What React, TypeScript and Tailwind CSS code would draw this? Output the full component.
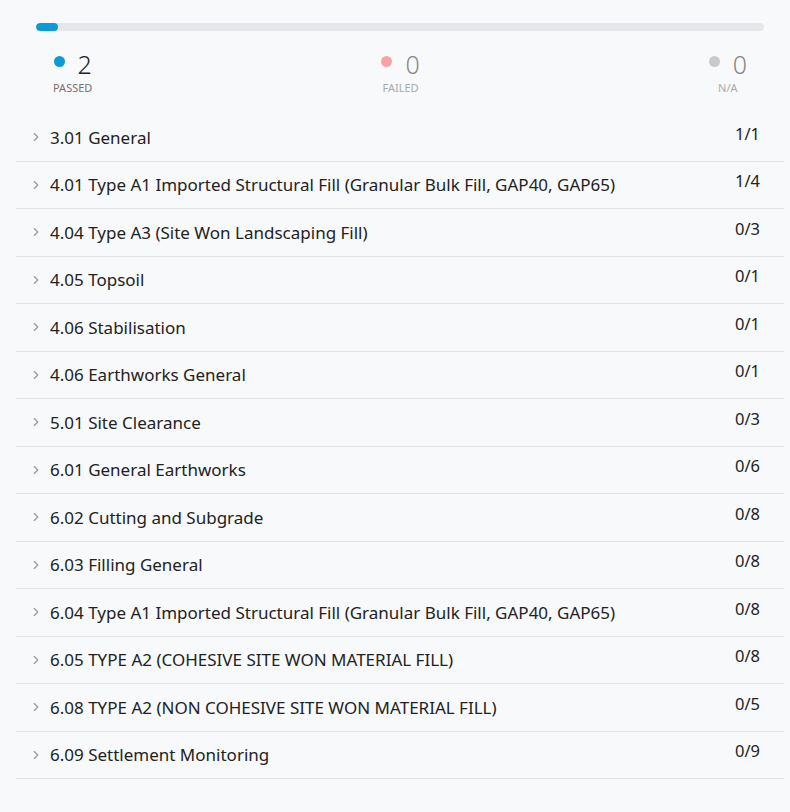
import { ChevronRight } from "lucide-react";

const sections = [
  { title: "3.01 General", count: "1/1" },
  { title: "4.01 Type A1 Imported Structural Fill (Granular Bulk Fill, GAP40, GAP65)", count: "1/4" },
  { title: "4.04 Type A3 (Site Won Landscaping Fill)", count: "0/3" },
  { title: "4.05 Topsoil", count: "0/1" },
  { title: "4.06 Stabilisation", count: "0/1" },
  { title: "4.06 Earthworks General", count: "0/1" },
  { title: "5.01 Site Clearance", count: "0/3" },
  { title: "6.01 General Earthworks", count: "0/6" },
  { title: "6.02 Cutting and Subgrade", count: "0/8" },
  { title: "6.03 Filling General", count: "0/8" },
  { title: "6.04 Type A1 Imported Structural Fill (Granular Bulk Fill, GAP40, GAP65)", count: "0/8" },
  { title: "6.05 TYPE A2 (COHESIVE SITE WON MATERIAL FILL)", count: "0/8" },
  { title: "6.08 TYPE A2 (NON COHESIVE SITE WON MATERIAL FILL)", count: "0/5" },
  { title: "6.09 Settlement Monitoring", count: "0/9" },
];

function Stat({ dot, value, label, valueClass, labelClass }: {
  dot: string;
  value: number;
  label: string;
  valueClass: string;
  labelClass: string;
}) {
  return (
    <div className="flex flex-col items-center">
      <div className="flex items-start gap-[13px]">
        <span className={`mt-[5px] w-[11px] h-[11px] rounded-full ${dot}`} />
        <span className={`text-[25px] leading-[26px] font-light ${valueClass}`}>{value}</span>
      </div>
      <span className={`text-[11px] leading-[13px] uppercase mt-[4px] ${labelClass}`}>{label}</span>
    </div>
  );
}

export default function App() {
  return (
    <div
      className="w-[790px] h-[812px] bg-[#f8f9fa] pt-[23px] pl-[16px] pr-[6px]"
      style={{ fontFamily: '"Noto Sans", "Open Sans", sans-serif' }}
    >
      {/* Progress */}
      <div className="mx-[20px] h-[8px] rounded-full bg-[#e6e7eb] overflow-hidden">
        <div className="h-full w-[22px] rounded-full bg-[#0a9bd6]" />
      </div>

      {/* Totals */}
      <div className="flex justify-between px-[37px] mt-[20px]">
        <Stat dot="bg-[#0a9bd6]" value={2} label="Passed" valueClass="text-[#222]" labelClass="text-[#7a6f6f]" />
        <Stat dot="bg-[#f7a3a6]" value={0} label="Failed" valueClass="text-[#888]" labelClass="text-[#aaa]" />
        <Stat dot="bg-[#c9c9c9]" value={0} label="N/A" valueClass="text-[#888]" labelClass="text-[#aaa]" />
      </div>

      {/* Sections */}
      <div className="mt-[20px]">
        {sections.map((s) => (
          <div
            key={s.title}
            className="h-[47.5px] border-b border-[#e4e5e8] flex items-center pl-[13px] pr-[24px] text-[#222]"
          >
            <ChevronRight className="w-[14px] h-[14px] text-[#999] mr-[7px]" strokeWidth={2} />
            <span className="flex-1 text-[17px]">{s.title}</span>
            <span className="text-[16.5px] -mt-[6px]">{s.count}</span>
          </div>
        ))}
      </div>
    </div>
  );
}
